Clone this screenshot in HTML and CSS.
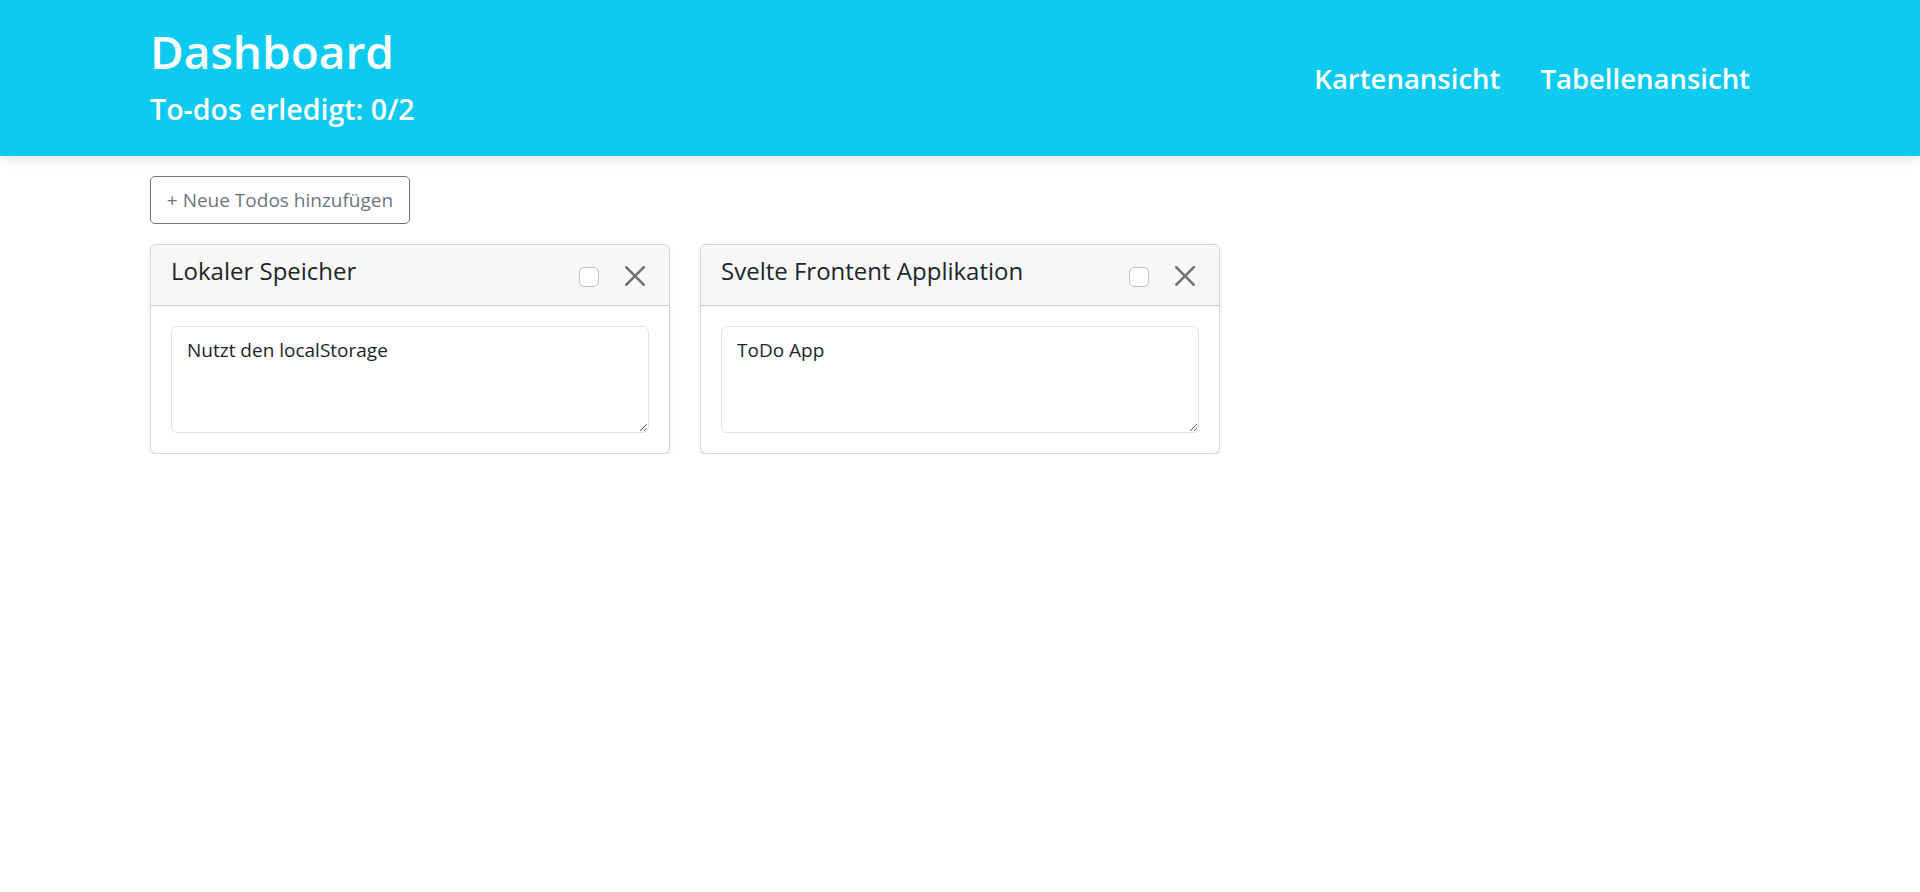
FILE: index.html
```html
<!DOCTYPE html>
<html lang="de">
<head>
<meta charset="utf-8">
<title>Dashboard</title>
<link rel="stylesheet" href="styles.css">
</head>
<body>
<header class="topbar">
  <div class="container topbar-inner">
    <div class="titles">
      <h1 class="title">Dashboard</h1>
      <h4 class="subtitle">To-dos erledigt: 0/2</h4>
    </div>
    <nav class="nav">
      <a class="nav-link" href="#">Kartenansicht</a>
      <a class="nav-link" href="#">Tabellenansicht</a>
    </nav>
  </div>
</header>
<main class="container">
  <button class="btn-add" type="button">+ Neue Todos hinzufügen</button>
  <div class="cards">
    <div class="card">
      <div class="card-header">
        <h5 class="card-title">Lokaler Speicher</h5>
        <div class="card-actions">
          <input class="check" type="checkbox">
          <button class="btn-close" type="button" aria-label="Schließen">
            <svg viewBox="0 0 16 16" width="20" height="20"><path d="M.293.293a1 1 0 0 1 1.414 0L8 6.586 14.293.293a1 1 0 1 1 1.414 1.414L9.414 8l6.293 6.293a1 1 0 0 1-1.414 1.414L8 9.414l-6.293 6.293a1 1 0 0 1-1.414-1.414L6.586 8 .293 1.707a1 1 0 0 1 0-1.414z" fill="currentColor"/></svg>
          </button>
        </div>
      </div>
      <div class="card-body">
        <textarea class="note" rows="3">Nutzt den localStorage</textarea>
      </div>
    </div>
    <div class="card">
      <div class="card-header">
        <h5 class="card-title">Svelte Frontent Applikation</h5>
        <div class="card-actions">
          <input class="check" type="checkbox">
          <button class="btn-close" type="button" aria-label="Schließen">
            <svg viewBox="0 0 16 16" width="20" height="20"><path d="M.293.293a1 1 0 0 1 1.414 0L8 6.586 14.293.293a1 1 0 1 1 1.414 1.414L9.414 8l6.293 6.293a1 1 0 0 1-1.414 1.414L8 9.414l-6.293 6.293a1 1 0 0 1-1.414-1.414L6.586 8 .293 1.707a1 1 0 0 1 0-1.414z" fill="currentColor"/></svg>
          </button>
        </div>
      </div>
      <div class="card-body">
        <textarea class="note" rows="3">ToDo App</textarea>
      </div>
    </div>
  </div>
</main>
</body>
</html>
```
FILE: styles.css
```css
* { box-sizing: border-box; }
html, body { margin: 0; padding: 0; }
body {
  font-family: "Open Sans", "Noto Sans", sans-serif;
  font-size: 19px;
  line-height: 30px;
  color: #212529;
  background: #fff;
}
.container {
  width: 1620px;
  margin: 0 auto;
}
.topbar {
  background: #0dcaf0;
  color: #fff;
  box-shadow: 0 5px 10px rgba(0, 0, 0, 0.08);
  position: relative;
}
.topbar-inner {
  display: flex;
  justify-content: space-between;
  align-items: center;
  padding: 21px 0 19px;
}
.title {
  margin: 0 0 10px;
  font-size: 46px;
  line-height: 60px;
  font-weight: 600;
}
.subtitle {
  margin: 0 0 10px;
  font-size: 28.6px;
  line-height: 36px;
  font-weight: 600;
}
.nav {
  display: flex;
}
.nav-link {
  color: #fff;
  text-decoration: none;
  font-size: 27.5px;
  font-weight: 600;
  line-height: 36px;
  padding: 10px 20px;
}
.btn-add {
  display: block;
  margin: 20px 0;
  font-family: inherit;
  font-size: 19px;
  line-height: 30px;
  padding: 8px 15px;
  color: #6c757d;
  background: #fff;
  border: 1px solid #6c757d;
  border-radius: 5px;
  height: 48px;
  width: 260px;
}
.cards {
  display: flex;
  gap: 30px;
  align-items: flex-start;
}
.card {
  width: 520px;
  border: 1px solid rgba(0, 0, 0, 0.16);
  border-radius: 6px;
  background: #fff;
  box-shadow: 0 2.5px 5px rgba(0, 0, 0, 0.075);
  overflow: hidden;
}
.card-header {
  display: flex;
  align-items: center;
  justify-content: space-between;
  background: #f7f7f7;
  border-bottom: 1px solid rgba(0, 0, 0, 0.16);
  padding: 11px 19px 9px 20px;
}
.card-title {
  margin: 0 0 10px;
  font-size: 24px;
  line-height: 30px;
  font-weight: 500;
  color: #212529;
}
.card-actions {
  display: flex;
  align-items: center;
}
.check {
  appearance: none;
  -webkit-appearance: none;
  width: 20px;
  height: 20px;
  margin: 2px 21px 0 0;
  border: 1px solid #c2c2c2;
  border-radius: 5px;
  background: #fff;
}
.btn-close {
  display: flex;
  align-items: center;
  justify-content: center;
  width: 30px;
  height: 30px;
  padding: 0;
  margin: 0;
  border: 0;
  background: transparent;
  color: #747474;
}
.card-body {
  padding: 20px;
}
.note {
  display: block;
  width: 100%;
  height: 107px;
  font-family: inherit;
  font-size: 19px;
  line-height: 30px;
  padding: 8px 15px 7px;
  color: #212529;
  border: 1px solid #dee2e6;
  border-radius: 6px;
  resize: vertical;
}
```
